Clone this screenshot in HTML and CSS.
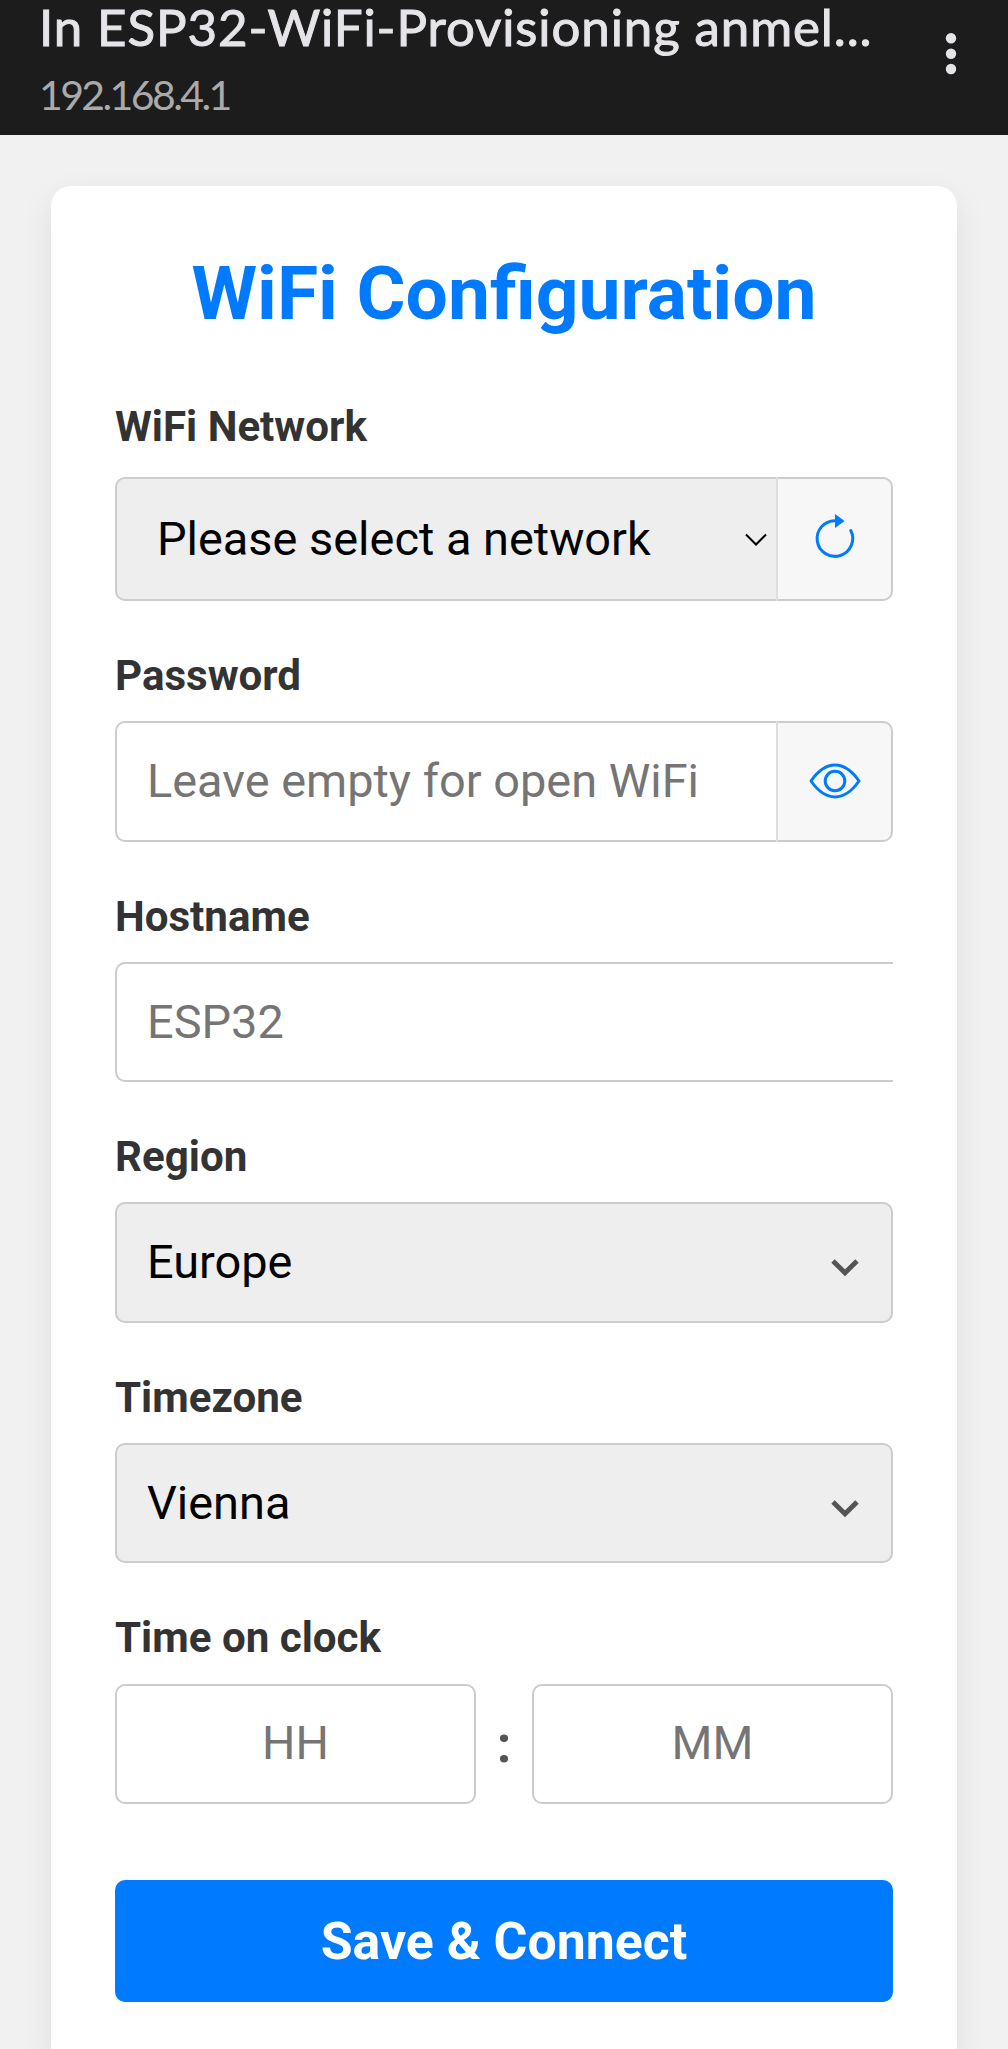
FILE: index.html
```
<!DOCTYPE html>
<html lang="en">
<head>
    <meta charset="UTF-8">
    <meta name="viewport" content="width=device-width, initial-scale=1.0">
    <title>WiFi Configuration</title>
    <link rel="stylesheet" href="styles.css">
</head>
<body>
    <header class="topbar">
        <div class="topbar-text">
            <div class="topbar-title">In ESP32-WiFi-Provisioning anmel...</div>
            <div class="topbar-url">192.168.4.1</div>
        </div>
        <svg class="menu-dots" width="12" height="44" viewBox="0 0 12 44">
            <circle cx="6" cy="6.3" r="5.2"/>
            <circle cx="6" cy="21.7" r="5.2"/>
            <circle cx="6" cy="37" r="5.2"/>
        </svg>
    </header>

    <form class="container">
        <h1>WiFi Configuration</h1>

        <div class="form-group network">
            <label for="ssid">WiFi Network</label>
            <div class="input-group">
                <div class="select-wrap">
                    <select id="ssid">
                        <option>Please select a network</option>
                    </select>
                    <svg class="arrow-thin" width="24" height="14" viewBox="0 0 24 14">
                        <path d="M2 1.5l10 10 10-10"/>
                    </svg>
                </div>
                <button type="button" class="icon-button" aria-label="Refresh">
                    <svg width="52" height="52" viewBox="0 0 52 52">
                        <path d="M26 7.7A17.8 17.8 0 1 0 41.8 17.5"/>
                        <path class="fill" d="M26 1l9.6 7L26 15z"/>
                    </svg>
                </button>
            </div>
        </div>

        <div class="form-group">
            <label for="password">Password</label>
            <div class="input-group">
                <input type="password" id="password" placeholder="Leave empty for open WiFi">
                <button type="button" class="icon-button" aria-label="Show password">
                    <svg width="52" height="52" viewBox="0 0 52 52">
                        <path d="M2 26C9 16 17 10.1 26 10.1S43 16 50 26C43 36 35 41.9 26 41.9S9 36 2 26z"/>
                        <circle cx="26" cy="26" r="9.8"/>
                    </svg>
                </button>
            </div>
        </div>

        <div class="form-group">
            <label for="hostname">Hostname</label>
            <div class="input-group">
                <input type="text" id="hostname" placeholder="ESP32">
            </div>
        </div>

        <div class="form-group">
            <label for="region">Region</label>
            <div class="select-wrap">
                <select id="region">
                    <option>Europe</option>
                </select>
                <svg class="arrow" width="30" height="20" viewBox="0 0 30 20">
                    <path d="M3 3l12 11.8L27 3"/>
                </svg>
            </div>
        </div>

        <div class="form-group">
            <label for="timezone">Timezone</label>
            <div class="select-wrap">
                <select id="timezone">
                    <option>Vienna</option>
                </select>
                <svg class="arrow" width="30" height="20" viewBox="0 0 30 20">
                    <path d="M3 3l12 11.8L27 3"/>
                </svg>
            </div>
        </div>

        <div class="form-group">
            <label for="hours">Time on clock</label>
            <div class="time-group">
                <input type="text" id="hours" placeholder="HH">
                <span>:</span>
                <input type="text" id="minutes" placeholder="MM">
            </div>
        </div>

        <button type="submit" class="submit">Save &amp; Connect</button>
    </form>
</body>
</html>
```
FILE: styles.css
```
* {
    box-sizing: border-box;
}
html, body {
    height: 100%;
    overflow: hidden;
}
body {
    font-family: Roboto, sans-serif;
    margin: 0;
    background-color: #f1f1f1;
    color: #333;
}

/* browser bar */
.topbar {
    display: flex;
    justify-content: space-between;
    height: 135px;
    padding: 0 51px 0 39px;
    background-color: #1c1c1c;
    font-family: Lato, sans-serif;
    position: relative;
    z-index: 1;
}
.topbar-title {
    font-size: 51px;
    line-height: 62px;
    margin-top: -4px;
    color: #e6e4e8;
    letter-spacing: 0.9px;
    white-space: nowrap;
    -webkit-text-stroke: 1px #e6e4e8;
}
.topbar-url {
    font-size: 41px;
    line-height: 50px;
    margin-top: 12px;
    color: #aaa;
    letter-spacing: -2.6px;
}
.menu-dots {
    margin-top: 32px;
    fill: #e6e4e8;
}

.container {
    width: 906px;
    margin: 51px auto 0;
    padding: 64px;
    background-color: #fff;
    border-radius: 20px;
    box-shadow: 0 12px 35px rgba(0, 0, 0, 0.08);
}
h1 {
    margin: 0 0 66px;
    font-size: 75px;
    line-height: 86px;
    text-align: center;
    color: #007bff;
}
.form-group {
    margin-bottom: 50px;
}
label {
    display: block;
    margin-bottom: 20.6px;
    font-size: 42.1px;
    line-height: 49.7px;
    font-weight: bold;
}
.network label {
    margin-bottom: 25.3px;
}
input, select {
    display: block;
    width: 100%;
    height: 120.3px;
    margin: 0;
    padding: 0 30px 2px;
    border: 2px solid #ccc;
    border-radius: 10px;
    font-family: inherit;
    font-size: 46.9px;
    background-color: #fff;
    color: #000;
    appearance: none;
}
select {
    background-color: #eee;
}
input::placeholder {
    color: #757575;
    opacity: 1;
}
.select-wrap {
    position: relative;
    flex: 1;
}
.arrow, .arrow-thin {
    position: absolute;
    fill: none;
}
.arrow {
    right: 33px;
    top: 56px;
    stroke: #555;
    stroke-width: 4.8;
}
.arrow-thin {
    right: 8px;
    top: 56px;
    stroke: #000;
    stroke-width: 2;
}

.input-group {
    display: flex;
    overflow: hidden;
}
.input-group input {
    flex: 1;
    min-width: 0;
}
.input-group input, .input-group select {
    border-right: none;
    border-radius: 10px 0 0 10px;
}
.network select {
    height: 124px;
    padding-left: 40px;
}
.icon-button {
    display: flex;
    align-items: center;
    justify-content: center;
    width: 117px;
    padding: 0;
    border: 2px solid #ccc;
    border-left-color: #ddd;
    border-radius: 0 10px 10px 0;
    background-color: #f7f7f7;
}
.icon-button svg {
    fill: none;
    stroke: #007bff;
    stroke-width: 3;
    stroke-linecap: round;
    stroke-linejoin: round;
}
.icon-button .fill {
    fill: #007bff;
    stroke: none;
}

.time-group {
    display: flex;
    align-items: center;
}
.time-group input {
    flex: 1;
    min-width: 0;
    text-align: center;
}
.time-group span {
    width: 56px;
    padding-top: 2px;
    text-align: center;
    font-size: 52px;
    font-weight: bold;
    color: #555;
}
.submit {
    display: block;
    width: 100%;
    height: 122px;
    margin-top: 76px;
    padding: 1px 0 0;
    border: none;
    border-radius: 10px;
    background-color: #007bff;
    color: #fff;
    font-family: inherit;
    font-size: 51.8px;
    font-weight: bold;
}
```
